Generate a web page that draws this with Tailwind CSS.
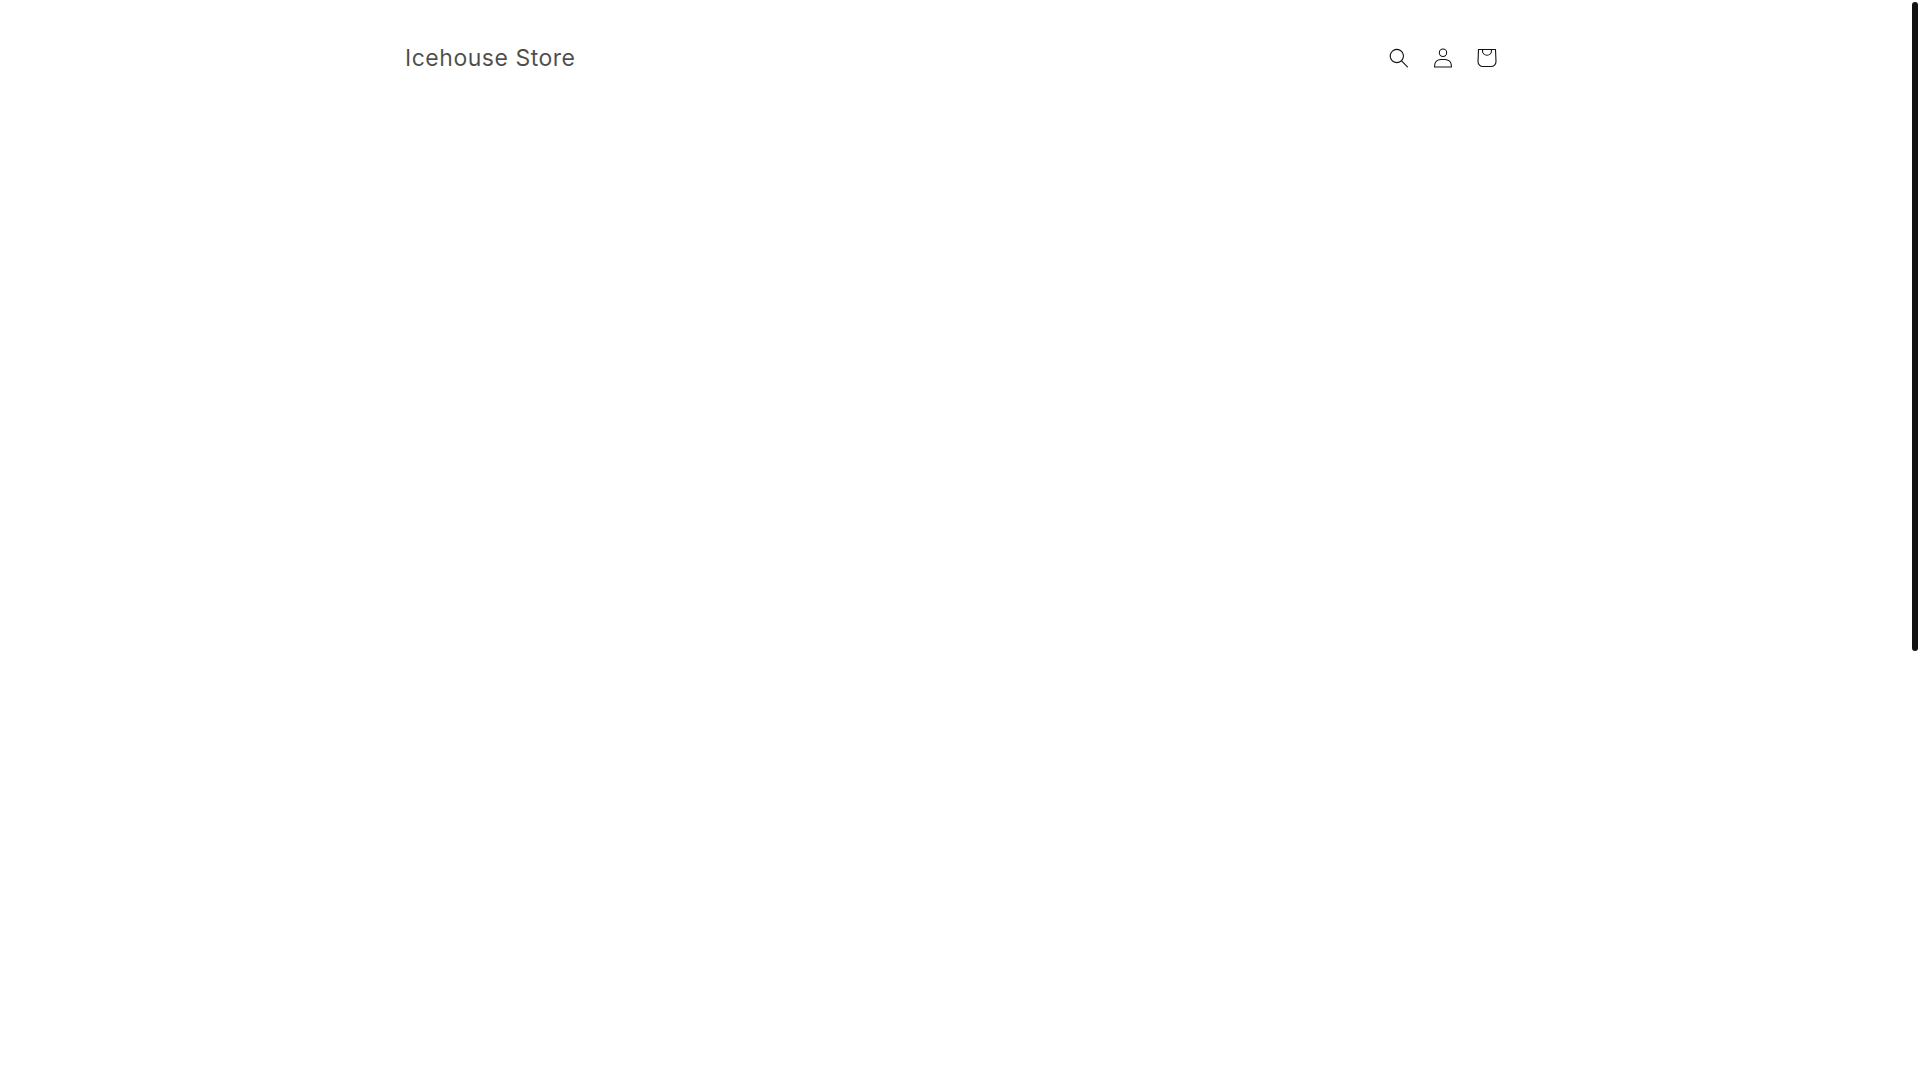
<!DOCTYPE html>
<html lang="en">
<head>
<meta charset="utf-8">
<title>Icehouse Store</title>
<script src="https://cdn.jsdelivr.net/npm/@tailwindcss/browser@4"></script>
</head>
<body class="relative h-[1080px] overflow-hidden bg-white font-['Inter',sans-serif] text-[#121212]">
<header class="flex h-[116px] items-center justify-between pl-[405px] pr-[411px]">
  <a class="text-[23px] leading-none tracking-[0.52px] text-[#121212]/75" href="#">Icehouse Store</a>
  <div class="flex">
    <button class="flex h-11 w-11 items-center justify-center" aria-label="Search">
      <svg class="h-[20px] w-[20px]" viewBox="0 0 18 19" fill="currentColor"><path fill-rule="evenodd" clip-rule="evenodd" d="M11.03 11.68A5.784 5.784 0 112.85 3.5a5.784 5.784 0 018.18 8.18zm.26 1.12a6.78 6.78 0 11.72-.7l5.4 5.4a.5.5 0 11-.71.7l-5.41-5.4z"/></svg>
    </button>
    <button class="flex h-11 w-11 items-center justify-center" aria-label="Log in">
      <svg class="h-[20px] w-[20px]" viewBox="0 0 18 19" fill="currentColor"><path fill-rule="evenodd" clip-rule="evenodd" d="M6 4.5a3 3 0 116 0 3 3 0 01-6 0zm3-4a4 4 0 100 8 4 4 0 000-8zm5.58 12.15c1.12.82 1.83 2.24 1.91 4.85H1.51c.08-2.6.79-4.03 1.9-4.85C4.66 11.75 6.5 11.5 9 11.5s4.35.26 5.58 1.15zM9 10.5c-2.5 0-4.65.24-6.17 1.35C1.27 12.98.5 14.93.5 18v.5h17V18c0-3.07-.77-5.02-2.33-6.15-1.52-1.1-3.67-1.35-6.17-1.35z"/></svg>
    </button>
    <button class="flex h-11 w-11 items-center justify-center" aria-label="Cart">
      <svg class="h-[20px] w-[20px]" viewBox="0 0 20 20" fill="none" stroke="currentColor" stroke-width="1.1"><path d="M1.5 1.5H18.5L19 13.5a5 5 0 0 1-5 5H6a5 5 0 0 1-5-5Z"/><path d="M5.5 1.5v1.2a4.5 4.5 0 0 0 9 0V1.5"/></svg>
    </button>
  </div>
</header>
<div class="absolute right-[2px] top-[2px] h-[649px] w-[6px] rounded-[3px] bg-[#121212]"></div>
</body>
</html>
